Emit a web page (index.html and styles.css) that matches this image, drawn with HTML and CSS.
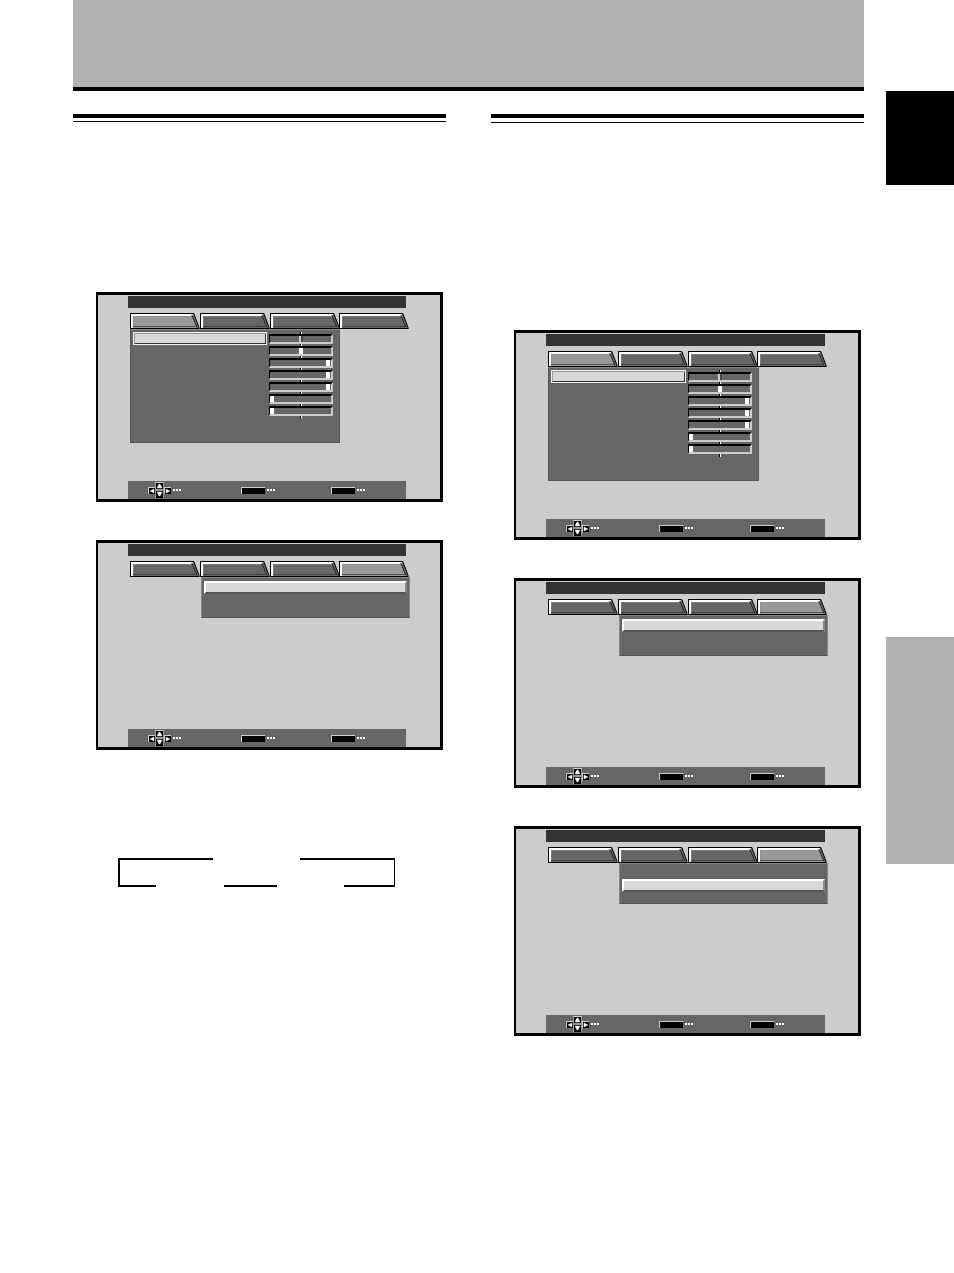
FILE: index.html
```html
<!DOCTYPE html>
<html lang="en">
<head>
    <meta charset="UTF-8">
    <meta name="viewport" content="width=device-width, initial-scale=1.0">
    <title>Screen menus</title>
    <link rel="stylesheet" href="styles.css">
</head>
<body>

    <svg class="symbols" aria-hidden="true">
        <symbol id="tab" viewBox="0 0 70 16" preserveAspectRatio="none">
            <path d="M0 0H64L70 16H0Z" fill="#666"/>
            <path d="M1 1H62L67 15H1Z" fill="currentColor"/>
            <path d="M1 1H63V3H3V15H1Z" fill="#fff"/>
            <path d="M3 3H62V4H4V13H3Z" fill="#888" opacity=".6"/>
            <path d="M3 13H66V14H3Z" fill="#333" opacity=".7"/>
            <path d="M62 2L67 14" fill="none" stroke="#222"/>
            <path d="M0.5 16V0.5H64L69.5 15" fill="none" stroke="#000"/>
            <path class="tab-base" d="M0 15H70V16H0Z"/>
        </symbol>
        <symbol id="arrows" viewBox="0 0 23 16">
            <path d="M7 0H16V16H7Z" fill="#999"/>
            <path d="M0 5H7V6H0ZM16 5H23V6H16Z" fill="#ccc"/>
            <path d="M0 5H1V12H0ZM7 0H16V1H7ZM16 5H17V12H16Z" fill="#ccc"/>
            <path d="M1 6H7V12H1ZM8 1H15V7H8ZM8 9H15V16H8ZM17 6H23V12H17Z" fill="#000"/>
            <path d="M2 9L6 7V11ZM22 9L18 7V11ZM11 2H12L14 6H9ZM11 14H12L14 10H9Z" fill="#fff" stroke="#fff" stroke-width=".4"/>
        </symbol>
        <symbol id="dots" viewBox="0 0 8 2">
            <path d="M0 0H2V2H0ZM3 0H5V2H3ZM6 0H8V2H6Z" fill="#fff"/>
        </symbol>
    </svg>

    <div class="page">
        <div class="main">
            <header class="banner"></header>

            <main class="columns">
                <section class="column">
                    <div class="rule"></div>

                    <div class="screens">
                        <div class="screen">
                            <div class="title-bar"></div>
                            <div class="tabs">
                                <button class="tab active" aria-label="Tab 1"><svg><use href="#tab"/></svg></button>
                                <button class="tab" aria-label="Tab 2"><svg><use href="#tab"/></svg></button>
                                <button class="tab" aria-label="Tab 3"><svg><use href="#tab"/></svg></button>
                                <button class="tab" aria-label="Tab 4"><svg><use href="#tab"/></svg></button>
                            </div>
                            <div class="panel panel-wide">
                                <button class="item" aria-label="Item 1"></button>
                                <div class="sliders">
                                    <input class="dim" type="range" value="50" aria-label="Level 1">
                                    <input type="range" value="50" aria-label="Level 2">
                                    <input type="range" value="98" aria-label="Level 3">
                                    <input type="range" value="98" aria-label="Level 4">
                                    <input type="range" value="98" aria-label="Level 5">
                                    <input type="range" value="0" aria-label="Level 6">
                                    <input type="range" value="0" aria-label="Level 7">
                                </div>
                            </div>
                            <div class="help">
                                <span class="hint"><svg class="arrows"><use href="#arrows"/></svg><svg class="dots"><use href="#dots"/></svg></span>
                                <span class="hint"><span class="key"></span><svg class="dots"><use href="#dots"/></svg></span>
                                <span class="hint"><span class="key"></span><svg class="dots"><use href="#dots"/></svg></span>
                            </div>
                        </div>

                        <div class="screen">
                            <div class="title-bar"></div>
                            <div class="tabs">
                                <button class="tab" aria-label="Tab 1"><svg><use href="#tab"/></svg></button>
                                <button class="tab" aria-label="Tab 2"><svg><use href="#tab"/></svg></button>
                                <button class="tab" aria-label="Tab 3"><svg><use href="#tab"/></svg></button>
                                <button class="tab active" aria-label="Tab 4"><svg><use href="#tab"/></svg></button>
                            </div>
                            <div class="panel panel-short">
                                <button class="item" aria-label="Item 1"></button>
                            </div>
                            <div class="help">
                                <span class="hint"><svg class="arrows"><use href="#arrows"/></svg><svg class="dots"><use href="#dots"/></svg></span>
                                <span class="hint"><span class="key"></span><svg class="dots"><use href="#dots"/></svg></span>
                                <span class="hint"><span class="key"></span><svg class="dots"><use href="#dots"/></svg></span>
                            </div>
                        </div>
                    </div>

                    <!-- loop between the three settings -->
                    <svg class="loop" viewBox="0 0 277 29" aria-hidden="true">
                        <path d="M95 1H1V28H38M106 28H159M182 1H276M226 28H276" fill="none" stroke="#000" stroke-width="2"/>
                        <path d="M276 0H277V29H276Z" fill="#000"/>
                    </svg>
                </section>

                <section class="column column-right">
                    <div class="rule"></div>

                    <div class="screens">
                        <div class="screen">
                            <div class="title-bar"></div>
                            <div class="tabs">
                                <button class="tab active" aria-label="Tab 1"><svg><use href="#tab"/></svg></button>
                                <button class="tab" aria-label="Tab 2"><svg><use href="#tab"/></svg></button>
                                <button class="tab" aria-label="Tab 3"><svg><use href="#tab"/></svg></button>
                                <button class="tab" aria-label="Tab 4"><svg><use href="#tab"/></svg></button>
                            </div>
                            <div class="panel panel-wide">
                                <button class="item" aria-label="Item 1"></button>
                                <div class="sliders">
                                    <input class="dim" type="range" value="50" aria-label="Level 1">
                                    <input type="range" value="50" aria-label="Level 2">
                                    <input type="range" value="98" aria-label="Level 3">
                                    <input type="range" value="98" aria-label="Level 4">
                                    <input type="range" value="98" aria-label="Level 5">
                                    <input type="range" value="0" aria-label="Level 6">
                                    <input type="range" value="0" aria-label="Level 7">
                                </div>
                            </div>
                            <div class="help">
                                <span class="hint"><svg class="arrows"><use href="#arrows"/></svg><svg class="dots"><use href="#dots"/></svg></span>
                                <span class="hint"><span class="key"></span><svg class="dots"><use href="#dots"/></svg></span>
                                <span class="hint"><span class="key"></span><svg class="dots"><use href="#dots"/></svg></span>
                            </div>
                        </div>

                        <div class="screen">
                            <div class="title-bar"></div>
                            <div class="tabs">
                                <button class="tab" aria-label="Tab 1"><svg><use href="#tab"/></svg></button>
                                <button class="tab" aria-label="Tab 2"><svg><use href="#tab"/></svg></button>
                                <button class="tab" aria-label="Tab 3"><svg><use href="#tab"/></svg></button>
                                <button class="tab active" aria-label="Tab 4"><svg><use href="#tab"/></svg></button>
                            </div>
                            <div class="panel panel-short">
                                <button class="item" aria-label="Item 1"></button>
                            </div>
                            <div class="help">
                                <span class="hint"><svg class="arrows"><use href="#arrows"/></svg><svg class="dots"><use href="#dots"/></svg></span>
                                <span class="hint"><span class="key"></span><svg class="dots"><use href="#dots"/></svg></span>
                                <span class="hint"><span class="key"></span><svg class="dots"><use href="#dots"/></svg></span>
                            </div>
                        </div>

                        <div class="screen">
                            <div class="title-bar"></div>
                            <div class="tabs">
                                <button class="tab" aria-label="Tab 1"><svg><use href="#tab"/></svg></button>
                                <button class="tab" aria-label="Tab 2"><svg><use href="#tab"/></svg></button>
                                <button class="tab" aria-label="Tab 3"><svg><use href="#tab"/></svg></button>
                                <button class="tab active" aria-label="Tab 4"><svg><use href="#tab"/></svg></button>
                            </div>
                            <div class="panel panel-short second-row">
                                <button class="item" aria-label="Item 2"></button>
                            </div>
                            <div class="help">
                                <span class="hint"><svg class="arrows"><use href="#arrows"/></svg><svg class="dots"><use href="#dots"/></svg></span>
                                <span class="hint"><span class="key"></span><svg class="dots"><use href="#dots"/></svg></span>
                                <span class="hint"><span class="key"></span><svg class="dots"><use href="#dots"/></svg></span>
                            </div>
                        </div>
                    </div>
                </section>
            </main>
        </div>

        <aside class="side">
            <div class="side-black"></div>
            <div class="side-gray"></div>
        </aside>
    </div>

</body>
</html>
```
FILE: styles.css
```css
* {
    margin: 0;
    padding: 0;
    box-sizing: border-box;
}

body {
    background-color: #fff;
    font-family: "Liberation Sans", Arial, sans-serif;
}

svg {
    display: block;
}

.symbols {
    position: absolute;
    width: 0;
    height: 0;
}

.page {
    display: grid;
    grid-template-columns: 1fr 68px;
    column-gap: 22px;
    min-height: 100vh;
    padding-left: 73px;
}

.banner {
    height: 91px;
    background-color: #b2b2b2;
    border-bottom: 4px solid #000;
}

.columns {
    display: grid;
    grid-template-columns: 1fr 1fr;
    column-gap: 45px;
    padding-top: 23px;
}

.rule {
    height: 8px;
    border-top: 4px solid #000;
    border-bottom: 1px solid #000;
}

.column-right .rule {
    height: 9px;
}

.screens {
    display: flex;
    flex-direction: column;
    gap: 38px;
    padding: 170px 3px 0 23px;
}

.column-right .screens {
    padding-top: 207px;
}

.screen {
    display: flex;
    flex-direction: column;
    min-height: 210px;
    padding: 1px 34px 0 30px;
    border: 3px solid #000;
    border-left-width: 2px;
    background-color: #ccc;
}

.column-right .screen {
    padding-right: 33px;
}

.title-bar {
    height: 12px;
    background-color: #333;
}

.tabs {
    display: flex;
    margin: 5px -3px 0 2px;
}

.column-right .tabs {
    margin-right: -2px;
}

.tab {
    flex: 1;
    height: 16px;
    border: none;
    background: none;
    color: #666;
}

.tab.active {
    color: #999;
}

.tab svg {
    width: 100%;
    height: 16px;
}

.tab-base {
    fill: #000;
}

.tab.active .tab-base {
    fill: #555;
}

.panel {
    display: flex;
    align-items: flex-start;
    background-color: #666;
    border: 1px solid #555;
    border-top-color: #888;
}

.panel-wide {
    margin: 0 66px 0 2px;
    height: 114px;
    padding: 2px 6px 0 2px;
    gap: 2px;
}

.panel-short {
    height: 41px;
    margin: 0 -4px 0 73px;
    padding: 3px 2px;
    border-right-color: #888;
    border-left-color: #888;
}

.column-right .panel-short {
    margin-right: -3px;
}

.second-row {
    padding-top: 15px;
}

.item {
    flex: 1;
    height: 13px;
    background-color: #d8d8d8;
    border: 2px solid #fff;
    border-right-color: #888;
    border-bottom-color: #555;
}

.panel-wide .item {
    border: 1px solid #eee;
    box-shadow: inset 1px 1px 0 #999, inset -1px -1px 0 #333;
}

.sliders {
    display: flex;
    flex-direction: column;
    gap: 2px;
    width: 64px;
    padding: 2px 0 3px;
    background: linear-gradient(to right, #000 50%, #fff 50%) center / 2px 100% no-repeat;
}

input[type="range"] {
    appearance: none;
    width: 100%;
    height: 10px;
    background-color: #666;
    border: 2px solid #000;
    border-left-width: 1px;
    border-right-color: #ccc;
    border-bottom-color: #ccc;
}

input[type="range"]::-webkit-slider-thumb {
    appearance: none;
    width: 4px;
    height: 6px;
    background-color: #fff;
}

input.dim::-webkit-slider-thumb {
    background: linear-gradient(to right, #ccc 50%, #444 50%);
}

.help {
    display: grid;
    grid-template-columns: 93fr 90fr 75fr;
    align-items: center;
    height: 18px;
    margin-top: auto;
    padding-left: 20px;
    background-color: #666;
}

.hint {
    display: flex;
    align-items: center;
    gap: 2px;
}

.arrows {
    width: 23px;
    height: 16px;
}

.dots {
    width: 8px;
    height: 2px;
}

.key {
    width: 24px;
    height: 7px;
    background-color: #000;
    border-top: 1px solid #ccc;
    border-left: 1px solid #ccc;
}

.loop {
    width: 277px;
    height: 29px;
    margin: 108px 0 0 45px;
}

.side {
    padding-top: 91px;
}

.side-black {
    height: 94px;
    background-color: #000;
}

.side-gray {
    height: 227px;
    margin-top: 452px;
    background-color: #b2b2b2;
}
```
